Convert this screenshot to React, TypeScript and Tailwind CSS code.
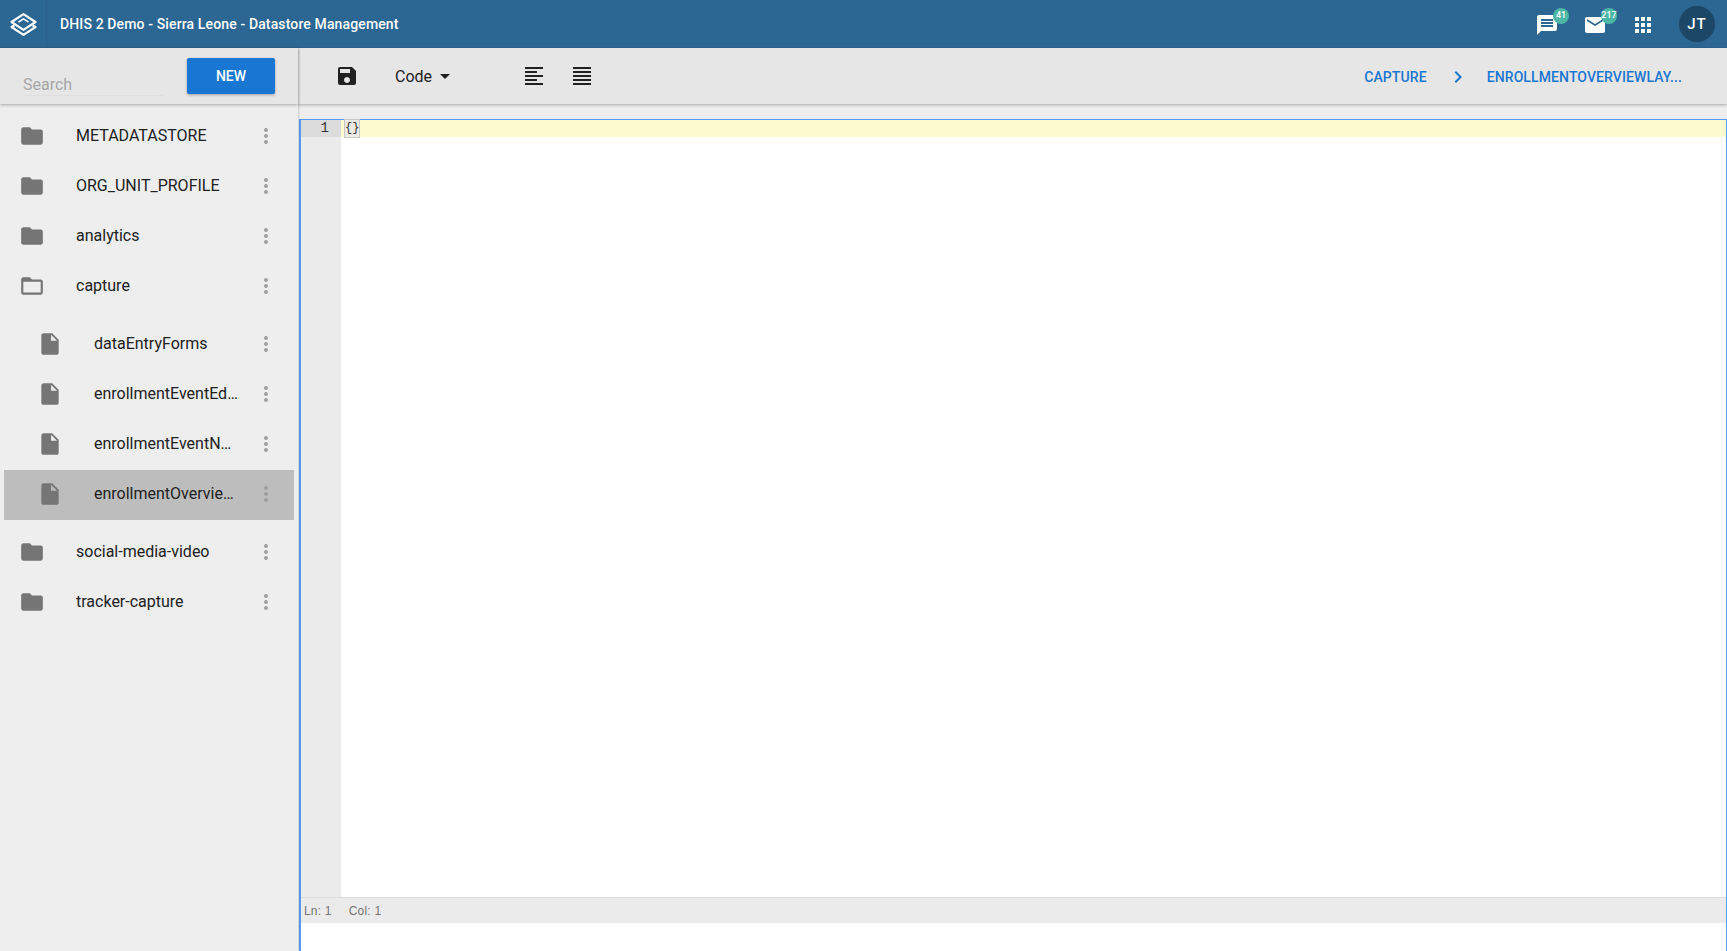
import { MdChevronRight, MdInsertDriveFile, MdFolder, MdFolderOpen, MdMoreVert, MdSave, MdArrowDropDown, MdFormatAlignLeft, MdFormatAlignJustify, MdMessage, MdEmail, MdApps } from "react-icons/md"

const topFolders = ["METADATASTORE", "ORG_UNIT_PROFILE", "analytics"]
const bottomFolders = ["social-media-video", "tracker-capture"]
const files = [
  { name: "dataEntryForms", selected: false },
  { name: "enrollmentEventEditLayout", selected: false },
  { name: "enrollmentEventNewLayout", selected: false },
  { name: "enrollmentOverviewLayout", selected: true },
]

function FolderRow({ name, open }: { name: string; open?: boolean }) {
  const Icon = open ? MdFolderOpen : MdFolder
  return (
    <div className="h-[50px] flex items-center pb-[2px] pl-[19px] pr-[20px] text-[16px] text-[#212121]">
      <Icon className="w-[26px] h-[26px] text-[#757575] shrink-0" />
      <span className="ml-[31px] flex-1 truncate">{name}</span>
      <MdMoreVert className="w-[24px] h-[24px] text-[#9e9e9e] shrink-0" />
    </div>
  )
}

function FileRow({ name, selected }: { name: string; selected: boolean }) {
  return (
    <div className={`h-[50px] ml-1 mr-[4px] flex items-center pb-[2px] pl-[33px] pr-[16px] text-[16px] text-[#212121] ${selected ? "bg-[#bdbdbd]" : ""}`}>
      <MdInsertDriveFile className="w-[26px] h-[26px] text-[#757575] shrink-0" />
      <span className="ml-[31px] w-[144px] truncate">{name}</span>
      <span className="flex-1" />
      <MdMoreVert className="w-[24px] h-[24px] text-[#9e9e9e] shrink-0" />
    </div>
  )
}

export default function App() {
  return (
    <div className="h-[951px] w-full overflow-hidden flex flex-col bg-[#eeeeee] font-['Roboto',sans-serif]">
      {/* Header */}
      <header className="h-[48px] shrink-0 bg-[#2c6693] flex items-center text-white">
        <div className="w-[47px] h-full flex items-center justify-center shrink-0 border-r border-[#2a6089]">
          <svg viewBox="0 0 27 23" className="w-[27px] h-[23px]" fill="none" stroke="white" strokeWidth="2.2" strokeLinejoin="round">
            <path d="M13.5 1.2 L25.5 9 L13.5 16.8 L1.5 9 Z" />
            <path d="M8.5 9 L13.5 5.8 L18.5 9" strokeWidth="1.6" />
            <path d="M4.5 12.2 L1.5 14 L13.5 21.8 L25.5 14 L22.5 12.2" />
          </svg>
        </div>
        <span className="ml-[13px] text-[14px] font-medium tracking-[0.13px]">DHIS 2 Demo - Sierra Leone - Datastore Management</span>
        <div className="ml-auto flex items-center">
          <div className="relative mr-[24px]">
            <MdMessage className="w-[24px] h-[24px] mt-[1px]" />
            <span className="absolute -top-[4px] left-[18px] w-4 h-4 rounded-full bg-[#4db6a4] text-[9px] font-medium flex items-center justify-center">41</span>
          </div>
          <div className="relative mr-[24px]">
            <MdEmail className="w-[24px] h-[24px] mt-[1px]" />
            <span className="absolute -top-[4px] left-[18px] w-4 h-4 rounded-full bg-[#4db6a4] text-[9px] font-medium flex items-center justify-center">217</span>
          </div>
          <MdApps className="w-[24px] h-[24px] mr-[24px] mt-[1px]" />
          <div className="w-9 h-9 rounded-full bg-[#1d4767] flex items-center justify-center text-[15px] font-medium tracking-[1px] mr-[12px]">JT</div>
        </div>
      </header>

      <div className="flex-1 flex min-h-0">
        {/* Sidebar */}
        <aside className="w-[298px] shrink-0 flex flex-col bg-[#eeeeee] shadow-[1px_0_2px_rgba(0,0,0,0.15)] z-10">
          <div className="h-[56px] shrink-0 bg-[#e6e6e6] shadow-[0_1px_3px_rgba(0,0,0,0.3)] flex pl-[23px]">
            <div className="w-[140px] h-[48px] flex items-end border-b border-[#dedede] text-[16px] text-[#a6a6a6]">
              <span className="leading-[20px]">Search</span>
            </div>
            <button className="ml-[24px] mt-[10px] w-[88px] h-[36px] rounded-[2px] bg-[#1976d2] text-white text-[14px] font-medium shadow-[0_1px_3px_rgba(0,0,0,0.3)]">NEW</button>
          </div>
          <div className="pt-[8px]">
            {topFolders.map((name) => (
              <FolderRow key={name} name={name} />
            ))}
            <FolderRow name="capture" open />
            <div className="py-[8px]">
              {files.map((file) => (
                <FileRow key={file.name} name={file.name} selected={file.selected} />
              ))}
            </div>
            {bottomFolders.map((name) => (
              <FolderRow key={name} name={name} />
            ))}
          </div>
        </aside>

        {/* Main */}
        <main className="flex-1 min-w-0 flex flex-col">
          <div className="h-[56px] shrink-0 bg-[#e6e6e6] shadow-[0_1px_3px_rgba(0,0,0,0.3)] flex items-center pl-[37px] pr-[45px] z-[5]">
            <MdSave className="w-[24px] h-[24px] text-[#212121]" />
            <span className="ml-[36px] mt-[2px] text-[16px] text-[#212121]">Code</span>
            <MdArrowDropDown className="ml-[1px] w-[24px] h-[24px] text-[#212121]" />
            <MdFormatAlignLeft className="ml-[65px] w-[24px] h-[24px] text-[#212121]" />
            <MdFormatAlignJustify className="ml-[24px] w-[24px] h-[24px] text-[#212121]" />
            <div className="ml-auto flex items-center text-[#1976d2] text-[14px] font-medium tracking-[0.1px]">
              <span className="mt-[2px]">CAPTURE</span>
              <MdChevronRight className="ml-[19px] mr-[17px] mt-[1px] w-[24px] h-[24px]" />
              <span className="mt-[2px]">ENROLLMENTOVERVIEWLAY...</span>
            </div>
          </div>

          {/* Editor */}
          <div className="flex-1 min-h-0 mt-[15px] ml-px border-t border-r border-l-2 border-[#5a9bf0] bg-white flex flex-col">
            <div className="flex-1 min-h-0 flex">
              <div className="w-[40px] shrink-0 bg-[#ebebeb]">
                <div className="h-[17px] bg-[#dcdcdc] pr-[12px] text-right font-['Liberation_Mono',monospace] text-[14px] leading-[17px] text-[#333333]">1</div>
              </div>
              <div className="flex-1 min-w-0">
                <div className="h-[17px] bg-[#fffbd1] pl-[4px] font-['Liberation_Mono',monospace] text-[12px] leading-[17px] text-[#333333]">
                  <span className="inline-block h-[17px] bg-[#ebebe3] outline outline-1 outline-[#c8c8c8]">{"{}"}</span>
                </div>
              </div>
            </div>
            <div className="h-[26px] shrink-0 bg-[#ebebeb] border-t border-[#dddddd] flex items-center pl-[3px] text-[12px] tracking-[0.2px] text-[#757575] font-['Liberation_Sans',sans-serif]">
              <span>Ln: 1</span>
              <span className="ml-[17px]">Col: 1</span>
            </div>
            <div className="h-[28px] shrink-0 bg-white" />
          </div>
        </main>
      </div>
    </div>
  )
}
